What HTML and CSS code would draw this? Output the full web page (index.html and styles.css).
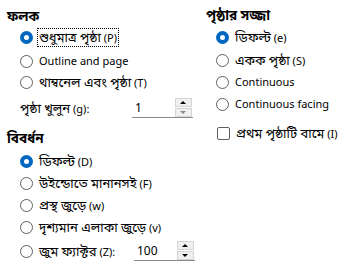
FILE: index.html
```html
<!DOCTYPE html>
<html>
<head>
<meta charset="utf-8">
<link rel="stylesheet" href="styles.css">
</head>
<body>
<div class="dialog">
  <div class="col left">
    <div class="head h1"><span class="bn">ফলক</span></div>
    <div class="row r1"><span class="radio on"></span><span class="lbl focus"><span class="bn">শুধুমাত্র পৃষ্ঠা</span> (P)</span></div>
    <div class="row r2"><span class="radio"></span><span class="lbl">Outline and page</span></div>
    <div class="row r3"><span class="radio"></span><span class="lbl"><span class="bn">থাম্বনেল এবং পৃষ্ঠা</span> (T)</span></div>
    <div class="row spinrow s1"><span class="slbl"><span class="bn">পৃষ্ঠা খুলুন</span> (g):</span>
      <div class="spin"><span class="val">1</span><span class="btns"><span class="btn up"></span><span class="btn down dis"></span></span></div>
    </div>
    <div class="head h2"><span class="bn">বিবর্ধন</span></div>
    <div class="row z1"><span class="radio on"></span><span class="lbl"><span class="bn">ডিফল্ট</span> (D)</span></div>
    <div class="row z2"><span class="radio"></span><span class="lbl"><span class="bn">উইন্ডোতে মানানসই</span> (F)</span></div>
    <div class="row z3"><span class="radio"></span><span class="lbl"><span class="bn">প্রস্থ জুড়ে</span> (w)</span></div>
    <div class="row z4"><span class="radio"></span><span class="lbl"><span class="bn">দৃশ্যমান এলাকা জুড়ে</span> (v)</span></div>
    <div class="row z5"><span class="radio"></span><span class="lbl zl"><span class="bn">জুম ফ্যাক্টর</span> (Z):</span>
      <div class="spin"><span class="val">100</span><span class="btns"><span class="btn up"></span><span class="btn down"></span></span></div>
    </div>
  </div>
  <div class="col right">
    <div class="head hr"><span class="bn">পৃষ্ঠার সজ্জা</span></div>
    <div class="row p1"><span class="radio on"></span><span class="lbl"><span class="bn">ডিফল্ট</span> (e)</span></div>
    <div class="row p2"><span class="radio"></span><span class="lbl"><span class="bn">একক পৃষ্ঠা</span> (S)</span></div>
    <div class="row p3"><span class="radio"></span><span class="lbl">Continuous</span></div>
    <div class="row p4"><span class="radio"></span><span class="lbl">Continuous facing</span></div>
    <div class="row p5"><span class="check"></span><span class="lbl"><span class="bn">প্রথম পৃষ্ঠাটি বামে</span> (I)</span></div>
  </div>
</div>
</body>
</html>
```
FILE: styles.css
```css
html, body {
  margin: 0;
  padding: 0;
  background: #ffffff;
}
body {
  font-family: "Noto Sans", "Noto Sans Bengali", sans-serif;
  font-size: 11px;
  color: #000000;
  width: 347px;
  height: 270px;
  overflow: hidden;
}
.bn { font-size: 13px; }
.head .bn { font-size: 13.5px; }
.dialog {
  display: grid;
  grid-template-columns: 199px 148px;
}
.col {
  display: flex;
  flex-direction: column;
}
.left { padding-left: 7px; }
.right { padding-left: 7px; }
.head {
  font-weight: bold;
  height: 16px;
  line-height: 16px;
}
.h1 { margin-top: 8px; }
.hr { margin-top: 7px; }
.row {
  display: flex;
  align-items: center;
  height: 22px;
  white-space: nowrap;
}
.left .row { padding-left: 13px; }
.right .row { padding-left: 10px; }
.r1 { margin-top: 2px; }
.r2 { margin-top: 2px; }
.r3 { margin-top: -1px; }
.s1 { margin-top: 4px; }
.h2 { margin-top: 11px; }
.z1 { margin-top: 4px; }
.z5 { margin-top: 2px; }
.p1 { margin-top: 3px; }
.p2 { margin-top: 1px; }
.p5 { margin-top: 7px; }
.radio {
  box-sizing: border-box;
  width: 13px;
  height: 13px;
  border-radius: 50%;
  border: 1px solid #606060;
  background: #fff;
  flex: none;
  margin-right: 4px;
  position: relative;
}
.radio.on {
  border: none;
  background: #0067c0;
}
.radio.on::after {
  content: "";
  position: absolute;
  left: 4px;
  top: 4px;
  width: 5px;
  height: 5px;
  border-radius: 50%;
  background: #fff;
}
.check {
  box-sizing: border-box;
  width: 13px;
  height: 13px;
  border: 1px solid #606060;
  border-radius: 2px;
  background: #fff;
  margin-left: 1px;
  margin-right: 4px;
  flex: none;
}
.lbl { padding: 0 1px; border: 1px solid transparent; line-height: 16px; }
.focus { border: 1px dotted #000; }
.slbl { width: 112px; flex: none; }
.zl { width: 93px; flex: none; }
.spin {
  display: flex;
  width: 61px;
  height: 20px;
  box-sizing: border-box;
  border-bottom: 1px solid #8a8a8a;
  background: #fff;
  flex: none;
}
.val {
  flex: 1;
  padding-left: 3px;
  line-height: 19px;
  font-size: 12px;
}
.btns {
  display: flex;
  flex-direction: column;
  justify-content: center;
  gap: 1px;
  width: 17px;
  padding-right: 1px;
}
.btn {
  box-sizing: border-box;
  height: 9px;
  border: 1px solid #d4d4d4;
  background: #f0f0f0;
  position: relative;
}
.btn::after {
  content: "";
  position: absolute;
  left: 4px;
  top: 2px;
  width: 0;
  height: 0;
  border-left: 3.5px solid transparent;
  border-right: 3.5px solid transparent;
}
.up::after { border-bottom: 3px solid #000; }
.down::after { border-top: 3px solid #000; top: 2px; }
.down.dis::after { border-top-color: #8a8a8a; }
```
